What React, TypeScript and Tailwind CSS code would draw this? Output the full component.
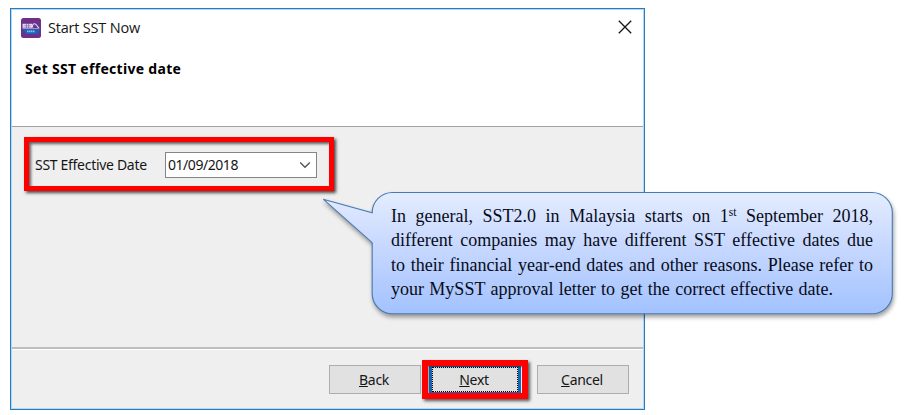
import type { ReactNode } from "react";

function AppIcon() {
  return (
    <svg width="20" height="20" viewBox="0 0 20 20" className="shrink-0">
      <rect x="0" y="0" width="20" height="20" rx="2.5" fill="#6b318b" />
      <path d="M1 10.8h18l-2.2 5.2H5z" fill="#1d62b4" />
      <path d="M1.5 5.8h3.4v4H1.5zM5.5 5.8h2v4h-2zM8.1 5.8h3v4h-3z" fill="#e6daf0" />
      <path d="M2.5 7.8h7.6" stroke="#8d62a8" strokeWidth="0.6" />
      <path d="M11.8 9.5c-.8-2 .2-3.8 1.8-3.8 2 0 2 2.4 4.6 4.6" fill="none" stroke="#e6daf0" strokeWidth="1.1" />
      <path d="M1.5 10.5h16" stroke="#c9b3dc" strokeWidth="0.7" />
      <path d="M6 13.3h8" stroke="#8fc0f0" strokeWidth="1.8" strokeDasharray="1.5 0.5" />
    </svg>
  );
}

function DialogButton({ children, focused }: { children: ReactNode; focused?: boolean }) {
  return (
    <button
      className={
        focused
          ? "relative flex h-[29px] w-[92px] items-center justify-center border-x-[3px] border-y-2 border-[#1667b5] bg-[#e1e1e1] pr-[2px]"
          : "flex h-[29px] w-[92px] items-center justify-center border border-[#adadad] bg-[#e1e1e1] pr-[2px]"
      }
    >
      {focused && <span className="absolute inset-0 border border-dotted border-black" />}
      <span>{children}</span>
      {focused && (
        <span className="absolute -inset-x-[10px] -inset-y-[7px] border-[6px] border-[#fe0000] shadow-[2px_2px_3px_rgba(0,0,0,0.65),inset_1px_1px_2px_rgba(0,0,0,0.4)]" />
      )}
    </button>
  );
}

function Callout() {
  return (
    <div className="absolute top-[192px] left-[322px] h-[123px] w-[571px]">
      <svg
        width="571"
        height="123"
        viewBox="0 0 571 123"
        className="absolute inset-0 overflow-visible drop-shadow-[1px_3px_2px_rgba(0,0,0,0.38)]"
      >
        <defs>
          <linearGradient id="fill" x1="0" y1="0" x2="0" y2="1">
            <stop offset="0" stopColor="#e4edff" />
            <stop offset="0.35" stopColor="#cddcff" />
            <stop offset="1" stopColor="#a2c2ff" />
          </linearGradient>
        </defs>
        <path
          d="M70.5 .5H550A20.3 20.3 0 0 1 570.3 20.8V101.5A20.3 20.3 0 0 1 550 121.8H70.5A20.3 20.3 0 0 1 50.2 101.5V50.7L1.2 7.2L50.2 20.8A20.3 20.3 0 0 1 70.5 .5Z"
          fill="url(#fill)"
          stroke="#4879b4"
          strokeWidth="1.1"
        />
      </svg>
      <div className="relative pt-[12px] pl-[69px] font-['Liberation_Serif',serif] text-[18px] leading-[24.3px] tracking-normal text-[#080b18]">
        <p className="w-[482px] whitespace-nowrap [text-align-last:justify]">
          In general, SST2.0 in Malaysia starts on 1
          <span className="relative -top-[6px] text-[11.5px] leading-none">st</span> September 2018,
        </p>
        <p className="w-[482px] whitespace-nowrap [text-align-last:justify]">
          different companies may have different SST effective dates due
        </p>
        <p className="w-[482px] whitespace-nowrap [text-align-last:justify]">
          to their financial year-end dates and other reasons. Please refer to
        </p>
        <p className="w-[442px] whitespace-nowrap [text-align-last:justify]">
          your MySST approval letter to get the correct effective date.
        </p>
      </div>
    </div>
  );
}

export default function App() {
  return (
    <div className="relative h-[415px] w-[906px] overflow-hidden bg-white pt-2 pl-[10px] font-['Noto_Sans',sans-serif] text-[14px] tracking-[-0.3px] text-[#161616]">
      <div className="flex h-[402px] w-[635px] flex-col border border-[#3278b5] bg-[#efefef] shadow-[inset_0_0_0_1px_#a8dcff]">
        <header className="m-px mb-0 h-[117px] border-b border-[#a0a0a0] bg-white">
          <div className="flex h-9 items-center pl-[9px]">
            <AppIcon />
            <h1 className="ml-[7px] font-['Open_Sans',sans-serif] text-[14.5px] tracking-[-0.2px]">Start SST Now</h1>
            <svg width="14" height="14" viewBox="0 0 14 14" className="mt-[-2px] mr-[11px] ml-auto">
              <path d="M.8 .8l12.4 12.4M13.2 .8L.8 13.2" stroke="#161616" strokeWidth="1.3" />
            </svg>
          </div>
          <h2 className="mt-[13px] ml-[13px] text-[14px] leading-5 font-bold tracking-[0.3px] text-black">Set SST effective date</h2>
        </header>
        <main className="flex-1 pt-[10px] pl-[13px]">
          <div className="flex h-[54px] w-[310px] items-center border-[5px] border-[#fe0000] pt-[2px] pl-[6px] shadow-[2px_2px_3px_rgba(0,0,0,0.7),inset_2px_2px_3px_rgba(0,0,0,0.6)]">
            <label className="-mt-[2px] w-[130px] whitespace-nowrap">SST Effective Date</label>
            <div className="flex h-[26px] w-[152px] items-center border border-[#858585] bg-white pr-[5px] pl-[2px]">
              <span className="-mt-[2px] tracking-[-0.45px]">01/09/2018</span>
              <svg width="12" height="8" viewBox="0 0 12 8" className="ml-auto">
                <path d="M1.2 1.5L6 6.2l4.8-4.7" fill="none" stroke="#555" strokeWidth="1.4" />
              </svg>
            </div>
          </div>
        </main>
        <footer className="m-px mt-0 flex h-[61px] items-start border-t-2 border-[#bdbdbd] pt-4 pl-[317px] shadow-[inset_0_1px_0_white]">
          <DialogButton><u>B</u>ack</DialogButton>
          <div className="ml-2"><DialogButton focused><u>N</u>ext</DialogButton></div>
          <div className="ml-4"><DialogButton><u>C</u>ancel</DialogButton></div>
        </footer>
      </div>
      <Callout />
    </div>
  );
}
